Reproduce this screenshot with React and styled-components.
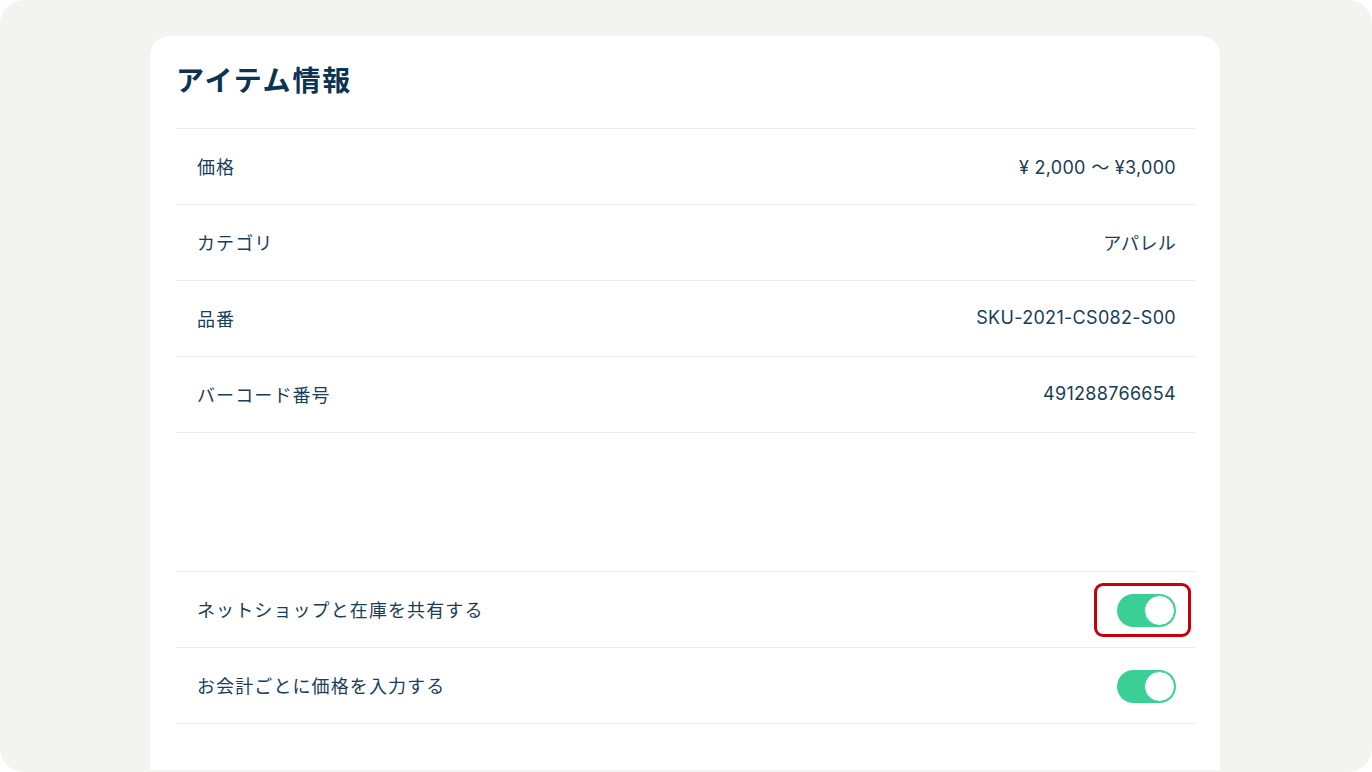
import React from 'react'
import styled, { createGlobalStyle } from 'styled-components'

const GlobalStyle = createGlobalStyle`
  html, body {
    margin: 0;
    padding: 0;
    background: #ffffff;
  }
  body {
    font-family: "Inter", "Noto Sans CJK JP", sans-serif;
    color: #163a55;
  }
`

const Frame = styled.div`
  width: 1372px;
  height: 772px;
  box-sizing: border-box;
  padding: 36px 0 2px 150px;
  border-radius: 24px;
  background: #f3f3ef;
  overflow: hidden;
`

const Card = styled.section`
  width: 1070px;
  height: 100%;
  box-sizing: border-box;
  padding: 0 24px 0 26px;
  background: #ffffff;
  border-radius: 20px 20px 0 0;
`

const Header = styled.header`
  height: 92px;
  display: flex;
  align-items: center;
  padding-bottom: 6px;
  box-sizing: border-box;
`

const Title = styled.h1`
  margin: 0;
  font-size: 28px;
  font-weight: 700;
  letter-spacing: 1.8px;
  color: #0c3350;
`

const List = styled.div`
  border-top: 1px solid #ececec;
  margin-top: ${(p) => p.$offset || 0}px;
`

const Row = styled.div`
  height: 76px;
  box-sizing: border-box;
  padding: 0 20px 2px 21px;
  display: flex;
  align-items: center;
  justify-content: space-between;
  border-bottom: 1px solid #ececec;
  font-size: 18px;
  letter-spacing: 1.1px;
`

const Label = styled.span`
  color: #1a3c56;
`

const Value = styled.span`
  color: #1a3c56;
  letter-spacing: 0.3px;
`

const ToggleWrap = styled.div`
  position: relative;
  display: flex;
  margin-top: 3px;

  ${(p) =>
    p.$marked &&
    `
    &::after {
      content: '';
      position: absolute;
      top: -11px;
      right: -15px;
      bottom: -10px;
      left: -23px;
      border: 3px solid #c5000b;
      border-radius: 9px;
    }
  `}
`

const Track = styled.button`
  width: 59px;
  height: 33px;
  padding: 0;
  border: none;
  border-radius: 17px;
  background: #3acf95;
  display: flex;
  align-items: center;
  justify-content: flex-end;
  cursor: pointer;
`

const Knob = styled.span`
  width: 31px;
  height: 31px;
  box-sizing: border-box;
  border-radius: 50%;
  background: #ffffff;
  border: 1.5px solid #3acf95;
  margin-right: 1px;
`

const Toggle = ({ marked }) => (
  <ToggleWrap $marked={marked}>
    <Track type="button" aria-pressed="true">
      <Knob />
    </Track>
  </ToggleWrap>
)

const details = [
  { label: '価格', value: '¥ 2,000 〜 ¥3,000' },
  { label: 'カテゴリ', value: 'アパレル' },
  { label: '品番', value: 'SKU-2021-CS082-S00' },
  { label: 'バーコード番号', value: '491288766654' },
]

const settings = [
  { label: 'ネットショップと在庫を共有する', marked: true },
  { label: 'お会計ごとに価格を入力する', marked: false },
]

const App = () => {
  return (
    <>
      <GlobalStyle />
      <Frame>
        <Card>
          <Header>
            <Title>アイテム情報</Title>
          </Header>

          <List>
            {details.map((d) => (
              <Row key={d.label}>
                <Label>{d.label}</Label>
                <Value>{d.value}</Value>
              </Row>
            ))}
          </List>

          <List $offset={138}>
            {settings.map((s) => (
              <Row key={s.label}>
                <Label>{s.label}</Label>
                <Toggle marked={s.marked} />
              </Row>
            ))}
          </List>
        </Card>
      </Frame>
    </>
  )
}

export default App
